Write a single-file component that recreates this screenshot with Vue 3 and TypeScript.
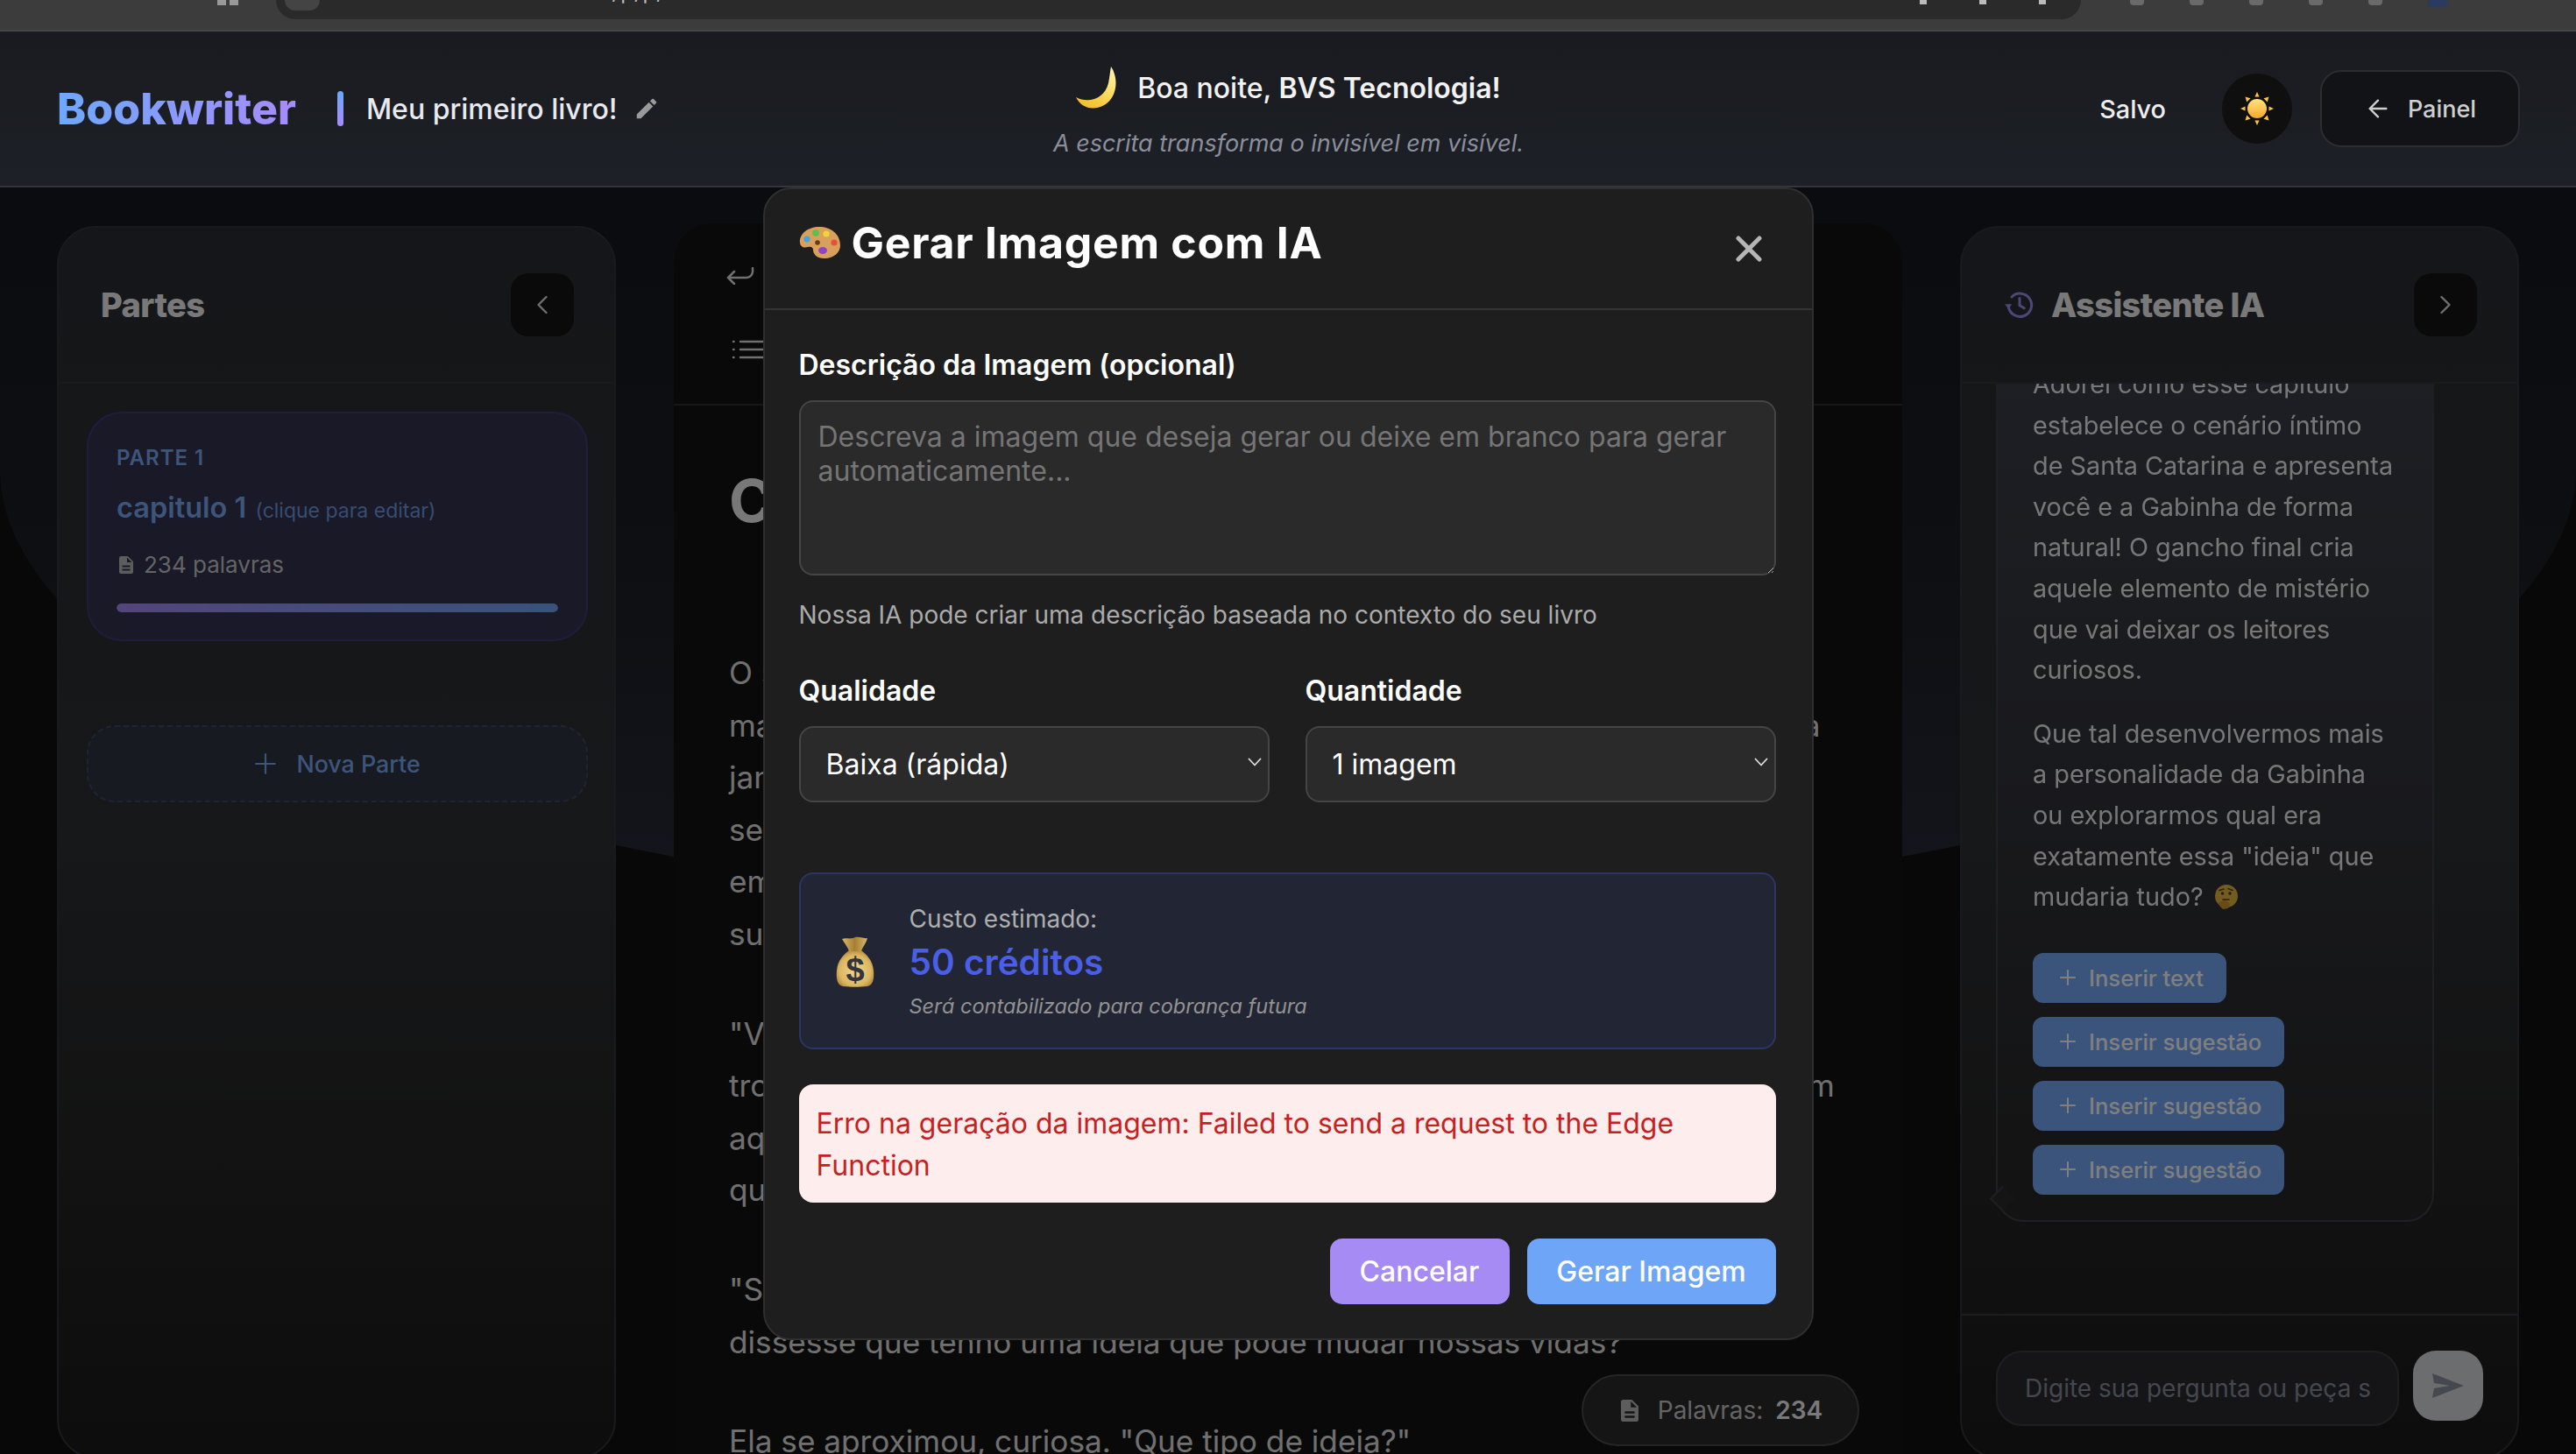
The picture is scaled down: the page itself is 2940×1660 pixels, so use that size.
<template>
  <div class="app">
    <!-- faixa do navegador -->
    <div class="chrome">
      <span class="chrome-dots"><i></i><i></i></span>
      <div class="url-bar">
        <span class="url-circle"></span>
        <span class="url-text">localhost/p/p/</span>
        <span class="url-icons"><i></i><i></i><i></i></span>
      </div>
      <span class="chrome-tools"><i></i><i></i><i></i><i></i><i></i><i class="avatar"></i></span>
    </div>

    <!-- cabeçalho -->
    <header class="header">
      <div class="header-left">
        <span class="logo">Bookwriter</span>
        <span class="logo-bar"></span>
        <span class="book-title">Meu primeiro livro!</span>
        <svg class="pencil" viewBox="0 0 24 24"><path d="M3 17.25V21h3.75L17.81 9.94l-3.75-3.75L3 17.25zM20.71 7.04a1 1 0 0 0 0-1.41l-2.34-2.34a1 1 0 0 0-1.41 0l-1.83 1.83 3.75 3.75 1.83-1.83z" /></svg>
      </div>
      <div class="header-center">
        <div class="greeting">
          <svg class="moon" viewBox="0 0 50 48">
            <defs>
              <linearGradient id="moonFill" x1="0.3" y1="1" x2="0.8" y2="0">
                <stop offset="0" stop-color="#f2bd2c" />
                <stop offset="0.6" stop-color="#fbe26e" />
                <stop offset="1" stop-color="#fff3b0" />
              </linearGradient>
            </defs>
            <path d="M40 0C52 18 44 47 20 47.500C11 47.700 4 43 0 35C15 43 33 36 37 19C38.500 12 39 5 40 0Z" fill="url(#moonFill)" />
          </svg>
          <span>Boa noite, <b>BVS Tecnologia!</b></span>
        </div>
        <div class="tagline">A escrita transforma o invisível em visível.</div>
      </div>
      <div class="header-right">
        <span class="saved">Salvo</span>
        <button class="theme-btn" type="button">
          <svg viewBox="0 0 40 40" width="40" height="40">
            <defs>
              <linearGradient id="sunFill" x1="0" y1="0" x2="0" y2="1">
                <stop offset="0" stop-color="#ffe47e" />
                <stop offset="1" stop-color="#f6a82a" />
              </linearGradient>
            </defs>
            <g fill="#f7c445">
              <path d="M20 1l2.600 5.500h-5.200zM20 39l-2.600-5.500h5.200zM1 20l5.500-2.600v5.200zM39 20l-5.500 2.600v-5.200z" />
              <path d="M6.500 6.500l6 1.800-4.200 4.200zM33.500 33.500l-6-1.800 4.200-4.200zM33.500 6.500l-1.800 6-4.200-4.200zM6.500 33.500l1.800-6 4.200 4.200z" />
            </g>
            <circle cx="20" cy="20" r="11" fill="url(#sunFill)" />
          </svg>
        </button>
        <button class="panel-btn" type="button">
          <svg viewBox="0 0 24 24" width="32" height="32" fill="none" stroke="currentColor" stroke-width="1.800" stroke-linecap="round" stroke-linejoin="round"><path d="M19 12H5M12 19l-7-7 7-7" /></svg>
          Painel
        </button>
      </div>
    </header>

    <main class="main">
      <!-- coluna de partes -->
      <aside class="panel">
        <div class="panel-head">
          <h2 class="panel-title">Partes</h2>
          <button class="collapse-btn" type="button">
            <svg viewBox="0 0 24 24" width="36" height="36" fill="none" stroke="currentColor" stroke-width="1.600" stroke-linecap="round" stroke-linejoin="round"><path d="M15 18l-6-6 6-6" /></svg>
          </button>
        </div>
        <div class="parts">
          <div class="part-card">
            <div class="part-label">PARTE 1</div>
            <div class="part-name">capitulo 1 <small>(clique para editar)</small></div>
            <div class="part-meta">
              <svg class="doc-icon" viewBox="0 0 16 20"><path :d="docPath" fill-rule="evenodd" /></svg>
              234 palavras
            </div>
            <div class="progress"><div class="progress-fill" :style="{ width: progress + '%' }"></div></div>
          </div>
          <button class="new-part" type="button">
            <svg viewBox="0 0 24 24" width="26" height="26" fill="none" stroke="currentColor" stroke-width="2" stroke-linecap="round"><path d="M12 2v20M2 12h20" /></svg>
            Nova Parte
          </button>
        </div>
      </aside>

      <!-- editor -->
      <section class="editor">
        <div class="toolbar">
          <div class="tool-row">
            <svg viewBox="0 0 32 20" width="32" height="20" fill="none" stroke="currentColor" stroke-width="2.500" stroke-linecap="round" stroke-linejoin="round"><path d="M30 1v4a7 7 0 0 1-7 7H2M9 5l-7 7 7 7" /></svg>
          </div>
          <div class="tool-row list-row">
            <svg viewBox="0 0 36 22" width="36" height="22" fill="none" stroke="currentColor" stroke-width="2" stroke-linecap="round"><path d="M10 2h26M10 11h26M10 20h26M2 2h.5M2 11h.5M2 20h.5" stroke-width="2.500" /></svg>
          </div>
        </div>
        <div class="page">
          <h1 class="chapter-title">Capitulo 1</h1>
          <p v-for="(para, i) in paragraphs" :key="i" class="para">
            <span v-for="line in para" :key="line" class="line">{{ line }}</span>
          </p>
        </div>
        <div class="word-pill">
          <svg class="doc-icon" viewBox="0 0 16 20"><path :d="docPath" fill-rule="evenodd" /></svg>
          <span>Palavras:</span>
          <b>234</b>
        </div>
      </section>

      <!-- assistente -->
      <aside class="panel">
        <div class="panel-head">
          <h2 class="panel-title assistant-title">
            <svg viewBox="0 0 24 24" width="36" height="36" fill="none" stroke="#9d8cf0" stroke-width="2" stroke-linecap="round" stroke-linejoin="round"><path d="M3.500 13A8.800 8.800 0 1 0 6 6" /><path d="M12 7v5.500l3.500 2" /><path d="M.8 11.500h5.400L3.500 15z" fill="#9d8cf0" stroke="none" /></svg>
            Assistente IA
          </h2>
          <button class="collapse-btn" type="button">
            <svg viewBox="0 0 24 24" width="36" height="36" fill="none" stroke="currentColor" stroke-width="1.600" stroke-linecap="round" stroke-linejoin="round"><path d="M9 18l6-6-6-6" /></svg>
          </button>
        </div>
        <div class="chat">
          <div class="bubble">
            <p class="bubble-text">Adorei como esse capítulo estabelece o cenário íntimo de Santa Catarina e apresenta você e a Gabinha de forma natural! O gancho final cria aquele elemento de mistério que vai deixar os leitores curiosos.</p>
            <p class="bubble-text">Que tal desenvolvermos mais a personalidade da Gabinha ou explorarmos qual era exatamente essa "ideia" que mudaria tudo?
              <svg class="think" viewBox="0 0 28 28">
                <circle cx="14" cy="13" r="13" fill="#f7c542" />
                <circle cx="9.500" cy="10" r="1.800" fill="#5a3e1b" />
                <circle cx="18" cy="10" r="1.800" fill="#5a3e1b" />
                <path d="M6 6.500l5-1.500M16 4.500l5 2M10 17h7" stroke="#5a3e1b" stroke-width="1.600" fill="none" stroke-linecap="round" />
                <path d="M5 20l6-2 4 1 3 3-2 5-6 1-4-4z" fill="#e0a030" />
              </svg>
            </p>
            <div class="inserts">
              <button v-for="(item, i) in inserts" :key="i" class="insert-btn" type="button">
                <svg viewBox="0 0 24 24" width="24" height="24" fill="none" stroke="currentColor" stroke-width="2" stroke-linecap="round"><path d="M12 4v16M4 12h16" /></svg>
                {{ item }}
              </button>
            </div>
            <span class="bubble-tail"></span>
          </div>
        </div>
        <div class="chat-input-row">
          <input class="chat-input" type="text" placeholder="Digite sua pergunta ou peça sugestões..." />
          <button class="send-btn" type="button">
            <svg viewBox="0 0 36 28" width="36" height="28"><path d="M0 0l36 14L0 28l2-11 18-3-18-3z" fill="#8a909e" /></svg>
          </button>
        </div>
      </aside>

      <!-- modal -->
      <div class="backdrop">
        <div class="modal">
          <div class="modal-head">
            <h3 class="modal-title">
              <svg class="palette" viewBox="0 0 48 38">
                <path d="M23 1C10 1 0 9 1 19c.6 6 6 6 9 5 3-1 6 0 6 3 0 5 4 10 13 10 11 0 18-7 18-15C47 9 36 1 23 1z" fill="#d9a05b" />
                <circle cx="9" cy="15" r="3.600" fill="#3fa4e8" />
                <circle cx="19" cy="8" r="3.800" fill="#5cc04c" />
                <circle cx="31" cy="9" r="3.600" fill="#f2d23c" />
                <circle cx="40" cy="19" r="3.600" fill="#e8503c" />
                <ellipse cx="27" cy="28" rx="5" ry="4" fill="#8e44c9" />
                <circle cx="21" cy="19" r="2.800" fill="#5f3d1c" />
              </svg>
              Gerar Imagem com IA
            </h3>
            <button class="close-btn" type="button">
              <svg viewBox="0 0 32 30" width="32" height="30" fill="none" stroke="currentColor" stroke-width="5" stroke-linecap="round"><path d="M4 3l24 24M28 3L4 27" /></svg>
            </button>
          </div>
          <div class="modal-body">
            <label class="field-label">Descrição da Imagem (opcional)</label>
            <textarea class="prompt" placeholder="Descreva a imagem que deseja gerar ou deixe em branco para gerar automaticamente..."></textarea>
            <p class="hint">Nossa IA pode criar uma descrição baseada no contexto do seu livro</p>

            <div class="selects">
              <div v-for="field in selects" :key="field.label" class="select-group">
                <label class="field-label">{{ field.label }}</label>
                <div class="select-wrap">
                  <select class="select">
                    <option>{{ field.value }}</option>
                  </select>
                  <svg class="select-arrow" viewBox="0 0 16 10" width="16" height="10" fill="none" stroke="#ddd" stroke-width="1.800" stroke-linecap="round" stroke-linejoin="round"><path d="M1.500 1.500L8 8.500l6.500-7" /></svg>
                </div>
              </div>
            </div>

            <div class="cost">
              <svg class="bag" viewBox="0 0 44 59">
                <defs>
                  <radialGradient id="bagFill" cx="0.5" cy="0.55" r="0.6">
                    <stop offset="0" stop-color="#efd68e" />
                    <stop offset="0.7" stop-color="#dcb763" />
                    <stop offset="1" stop-color="#a9812f" />
                  </radialGradient>
                  <linearGradient id="tieFill" x1="0" y1="0" x2="1" y2="0">
                    <stop offset="0" stop-color="#d9b868" />
                    <stop offset="0.5" stop-color="#a67f32" />
                    <stop offset="1" stop-color="#d9b868" />
                  </linearGradient>
                </defs>
                <path d="M15 17C9 22 2 28 1 40C0 50 2 57 8 58C16 59 28 59 36 58C42 57 44 50 43 40C42 28 35 22 29 17Z" fill="url(#bagFill)" />
                <path d="M7 4C12 2 16 5 22 2C28 1 33 4 36 3C34 10 30 14 29 18L15 18C14 14 10 9 7 4Z" fill="url(#tieFill)" />
                <text x="22" y="52" text-anchor="middle" class="bag-sign">$</text>
              </svg>
              <div class="cost-text">
                <div class="cost-label">Custo estimado:</div>
                <div class="cost-value">50 créditos</div>
                <div class="cost-note">Será contabilizado para cobrança futura</div>
              </div>
            </div>

            <div class="error-box">Erro na geração da imagem: Failed to send a request to the Edge Function</div>

            <div class="modal-actions">
              <button class="btn btn-cancel" type="button">Cancelar</button>
              <button class="btn btn-generate" type="button">Gerar Imagem</button>
            </div>
          </div>
        </div>
      </div>
    </main>
  </div>
</template>

<script setup lang="ts">
import { ref } from 'vue'

const progress = ref(100)

const docPath =
  'M2 0h8l6 6v12a2 2 0 0 1-2 2H2a2 2 0 0 1-2-2V2a2 2 0 0 1 2-2zM9 1.500V7h5.500zM3.500 10.500v2h9v-2zM3.500 14.500v2h9v-2z'

const inserts = ['Inserir text', 'Inserir sugestão', 'Inserir sugestão', 'Inserir sugestão']

const selects = [
  { label: 'Qualidade', value: 'Baixa (rápida)' },
  { label: 'Quantidade', value: '1 imagem' }
]

const paragraphs: string[][] = [
  [
    'O sol se punha sobre as praias de Santa Catarina enquanto eu',
    'mantinha os olhos fixos na tela do computador, e a Gabinha me esperava a',
    'janela aberta deixava entrar o cheiro salgado do mar pela casa',
    'sem pressa alguma, ela atravessou a sala com duas xícaras de café',
    'em silêncio, sentou-se ao meu lado e espiou todas as anotações da minha',
    'suposta grande história, aquela que eu nunca terminava.'
  ],
  [
    '"Você já pensou em largar tudo?", perguntei, sem coragem de olhar.',
    'trocando o peso de um pé para o outro, ela riu baixinho e disse que sim, em',
    'aquele lugar guardava segredos que nenhum de nós conhecia ainda',
    'quando o silêncio voltou, respirei fundo e fechei o caderno.'
  ],
  [
    '"Se eu te contasse tudo agora, você acreditaria? E se eu',
    'dissesse que tenho uma ideia que pode mudar nossas vidas?'
  ],
  ['Ela se aproximou, curiosa. "Que tipo de ideia?"']
]
</script>

<style>
html,
body {
  margin: 0;
  background: #060606;
}
</style>

<style scoped>
.app {
  width: 2940px;
  height: 1660px;
  overflow: hidden;
  display: flex;
  flex-direction: column;
  font-family: Inter, 'Liberation Sans', sans-serif;
  color: #fff;
}

button {
  font-family: inherit;
  border: none;
  cursor: pointer;
}

/* navegador */
.chrome {
  height: 34px;
  flex: none;
  background: #3c3c3c;
  border-bottom: 2px solid #474747;
  display: flex;
  align-items: flex-start;
  overflow: hidden;
}

.chrome-dots {
  display: flex;
  gap: 4px;
  margin-left: 248px;
}

.chrome-dots i {
  width: 10px;
  height: 6px;
  background: #999;
}

.url-bar {
  width: 2060px;
  height: 22px;
  margin-left: 43px;
  background: #2a2a2a;
  border-radius: 0 0 24px 24px;
  display: flex;
  align-items: flex-start;
  overflow: hidden;
}

.url-circle {
  width: 40px;
  height: 12px;
  margin-left: 10px;
  background: #444;
  border-radius: 0 0 20px 20px;
}

.url-text {
  margin: -24px 0 0 222px;
  font-size: 24px;
  line-height: 30px;
  letter-spacing: 1px;
  color: #bbb;
  white-space: nowrap;
}

.url-icons {
  margin-left: auto;
  margin-right: 40px;
  display: flex;
  gap: 60px;
}

.url-icons i {
  width: 8px;
  height: 5px;
  background: #bbb;
}

.chrome-tools {
  display: flex;
  gap: 52px;
  margin-left: 56px;
}

.chrome-tools i {
  width: 16px;
  height: 6px;
  background: #6a6a6a;
  border-radius: 0 0 4px 4px;
}

.chrome-tools .avatar {
  width: 22px;
  height: 8px;
  background: #2a3a60;
}

/* cabeçalho */
.header {
  height: 178px;
  flex: none;
  box-sizing: border-box;
  padding: 0 64px 0 65px;
  background: linear-gradient(180deg, #191b20 0%, #1d2026 100%);
  border-bottom: 2px solid #34363a;
  display: grid;
  grid-template-columns: 1fr auto 1fr;
  align-items: center;
}

.header-left {
  display: flex;
  align-items: center;
}

.logo {
  font-size: 50px;
  font-weight: 800;
  letter-spacing: 0;
  background: linear-gradient(90deg, #6ea8fe, #a78bfa);
  -webkit-background-clip: text;
  background-clip: text;
  color: transparent;
}

.logo-bar {
  width: 7px;
  height: 40px;
  margin: 0 26px 0 47px;
  border-radius: 4px;
  background: linear-gradient(180deg, #6ea8fe, #a78bfa);
}

.book-title {
  font-size: 32px;
  font-weight: 500;
  color: #e8eaf0;
}

.pencil {
  width: 30px;
  height: 30px;
  margin-left: 18px;
  fill: #9a9a9a;
}

.header-center {
  display: flex;
  flex-direction: column;
  align-items: center;
  gap: 23px;
  margin-top: 8px;
}

.greeting {
  display: flex;
  align-items: center;
  gap: 20px;
  font-size: 32px;
  font-weight: 500;
  color: #f2f2f2;
}

.greeting b {
  font-weight: 600;
}

.moon {
  width: 50px;
  height: 48px;
}

.tagline {
  font-size: 27px;
  font-style: italic;
  color: #8b8f9c;
}

.header-right {
  display: flex;
  align-items: center;
  justify-content: flex-end;
}

.saved {
  font-size: 28.800px;
  font-weight: 500;
  color: #eee;
  margin-right: 64px;
}

.theme-btn {
  width: 80px;
  height: 80px;
  border-radius: 50%;
  background: #0f0f0f;
  display: flex;
  align-items: center;
  justify-content: center;
  padding: 0;
}

.panel-btn {
  width: 228px;
  height: 88px;
  margin-left: 32px;
  background: #111317;
  border: 2px solid #2b2d33;
  border-radius: 24px;
  color: #cfcfcf;
  font-size: 27px;
  font-weight: 500;
  display: flex;
  align-items: center;
  justify-content: center;
  gap: 18px;
}

/* área principal */
.main {
  flex: 1;
  position: relative;
  overflow: hidden;
  box-sizing: border-box;
  padding: 44px 65px 0 65px;
  background: #101010;
  display: grid;
  grid-template-columns: 638px 1402px 638px;
  column-gap: 66px;
  align-items: start;
}

.main::before {
  content: '';
  position: absolute;
  left: 0;
  right: 0;
  top: 0;
  height: 825px;
  border-radius: 0 0 1470px 1470px / 0 0 504px 504px;
  background: linear-gradient(180deg, #16181e 0%, #1c1e24 50%, #2a2c3a 100%);
}

.panel {
  position: relative;
  height: 1407px;
  box-sizing: border-box;
  border: 2px solid #33353b;
  border-radius: 44px;
  background: linear-gradient(180deg, #2a2d33 0%, #2e3033 50%, #262627 75%, #1a1a1a 100%);
  display: flex;
  flex-direction: column;
  overflow: hidden;
}

.panel-head {
  height: 178px;
  flex: none;
  box-sizing: border-box;
  padding: 0 46px 0 48px;
  border-bottom: 2px solid #33353b;
  display: flex;
  align-items: center;
  justify-content: space-between;
}

.panel-title {
  margin: 0;
  font-size: 38px;
  font-weight: 800;
  letter-spacing: -0.6px;
  color: #f2f2f2;
}

.assistant-title {
  display: flex;
  align-items: center;
  gap: 18px;
}

.collapse-btn {
  width: 72px;
  height: 72px;
  border-radius: 20px;
  background: #141414;
  color: #ddd;
  display: flex;
  align-items: center;
  justify-content: center;
  padding: 0;
}

.parts {
  padding: 32px 30px 0 32px;
}

.part-card {
  box-sizing: border-box;
  height: 262px;
  padding: 36px 32px 0;
  border: 2px solid #3c3a7c;
  border-radius: 40px;
  background: #32324e;
}

.part-label {
  font-size: 24px;
  font-weight: 600;
  letter-spacing: 1px;
  line-height: 30px;
  color: #7cabf5;
}

.part-name {
  margin-top: 18px;
  font-size: 32.500px;
  font-weight: 600;
  line-height: 48px;
  color: #7cabf5;
}

.part-name small {
  margin-left: 2px;
  font-size: 23px;
  font-weight: 400;
  color: #6f9ae0;
}

.part-meta {
  margin-top: 22px;
  display: flex;
  align-items: center;
  gap: 12px;
  font-size: 26px;
  line-height: 32px;
  color: #c8c8c8;
}

.doc-icon {
  width: 16px;
  height: 20px;
  fill: #bbb;
  margin-left: 3px;
}

.progress {
  margin-top: 28px;
  height: 10px;
  border-radius: 5px;
  background: #2a2a40;
  overflow: hidden;
}

.progress-fill {
  height: 100%;
  border-radius: 5px;
  background: linear-gradient(90deg, #a78bfa, #70a5f5);
}

.new-part {
  width: 100%;
  height: 88px;
  margin-top: 96px;
  border: 2px dashed #3f4a60;
  border-radius: 32px;
  background: #2e3440;
  color: #7cabf5;
  font-size: 26.800px;
  font-weight: 500;
  display: flex;
  align-items: center;
  justify-content: center;
  gap: 22px;
}

/* editor */
.editor {
  position: relative;
  margin-top: -3px;
  height: 1500px;
  border-radius: 44px 44px 0 0;
  background: #121212;
}

.toolbar {
  height: 208px;
  box-sizing: border-box;
  border-bottom: 2px solid #2e2e2e;
  color: #e0e0e0;
}

.tool-row {
  height: 120px;
  padding-left: 60px;
  display: flex;
  align-items: center;
}

.list-row {
  height: 48px;
  padding-left: 66px;
}

.page {
  padding: 67px 63px 0;
}

.chapter-title {
  margin: 0 0 127px;
  font-size: 68px;
  line-height: 82px;
  font-weight: 700;
  color: #f0f0f0;
}

.para {
  margin: 0 0 54px;
  font-size: 35.200px;
  line-height: 59.600px;
  color: #e0e0e0;
}

.line {
  display: block;
  white-space: nowrap;
}

.word-pill {
  position: absolute;
  left: 1036px;
  top: 1314px;
  height: 82px;
  width: 317px;
  box-sizing: border-box;
  border: 2px solid #4a4a4a;
  border-radius: 41px;
  background: #2a2a2a;
  display: flex;
  align-items: center;
  justify-content: center;
  gap: 14px;
  font-size: 28px;
  color: #c8c8c8;
}

.word-pill .doc-icon {
  width: 20px;
  height: 25px;
  margin-right: 8px;
}

.word-pill b {
  font-weight: 600;
  color: #f2f2f2;
}

/* assistente */
.chat {
  height: 1062px;
  flex: none;
  overflow: hidden;
  box-sizing: border-box;
  padding: 0 0 0 39px;
}

.bubble {
  position: relative;
  width: 500px;
  height: 981px;
  box-sizing: border-box;
  margin-top: -24px;
  padding: 0 40px;
  border: 2px solid #3f4046;
  border-radius: 0 0 32px 32px;
  background: linear-gradient(180deg, #3c3e48 0%, #32333a 50%, #262626 100%);
}

.bubble-text {
  margin: 0 0 26px;
  font-size: 28.800px;
  line-height: 46.600px;
  color: #fff;
  opacity: 0.92;
}

.think {
  width: 28px;
  height: 28px;
  vertical-align: -4px;
  margin-left: 4px;
}

.inserts {
  margin-top: 40px;
  display: flex;
  flex-direction: column;
  align-items: flex-start;
  gap: 16px;
}

.insert-btn {
  height: 57px;
  padding: 0 26px 0 28px;
  border-radius: 12px;
  background: #76a9f7;
  color: #fff;
  font-size: 25.600px;
  font-weight: 500;
  display: flex;
  align-items: center;
  gap: 12px;
}

.bubble-tail {
  position: absolute;
  left: -5px;
  bottom: 14px;
  width: 19px;
  height: 19px;
  transform: rotate(45deg);
  background: #2a2a2c;
  border-left: 2px solid #3f4046;
  border-bottom: 2px solid #3f4046;
}

.chat-input-row {
  border-top: 2px solid #3a3b40;
  padding: 40px 37px 0 39px;
  display: flex;
  gap: 16px;
  align-items: flex-start;
}

.chat-input {
  width: 460px;
  height: 86px;
  box-sizing: border-box;
  padding: 0 31px;
  border: 2px solid #3e3f44;
  border-radius: 30px;
  background: #2a2b2f;
  color: #fff;
  font-family: inherit;
  font-size: 28px;
  outline: none;
}

.chat-input::placeholder {
  color: #8a8f9c;
}

.send-btn {
  width: 80px;
  height: 80px;
  border-radius: 26px;
  background: #d8dade;
  display: flex;
  align-items: center;
  justify-content: center;
  padding: 0;
}

/* modal */
.backdrop {
  position: absolute;
  inset: 0;
  background: rgba(0, 0, 0, 0.5);
  display: flex;
  justify-content: center;
  align-items: flex-start;
}

.modal {
  width: 1199px;
  height: 1316px;
  box-sizing: border-box;
  border: 2px solid #2f2f2f;
  border-radius: 32px;
  background: #1e1e1e;
}

.modal-head {
  height: 138px;
  box-sizing: border-box;
  padding: 0 56px 0 39px;
  border-bottom: 2px solid #333;
  display: flex;
  align-items: center;
  justify-content: space-between;
}

.modal-title {
  margin: 0 0 14px;
  display: flex;
  align-items: center;
  gap: 12px;
  font-size: 50px;
  font-weight: 700;
  letter-spacing: 0.7px;
  color: #fff;
}

.palette {
  width: 48px;
  height: 38px;
}

.close-btn {
  background: none;
  color: #b5b5b5;
  padding: 0;
  display: flex;
}

.modal-body {
  padding: 43px 41px 0 39px;
}

.field-label {
  display: block;
  font-size: 32px;
  font-weight: 600;
  line-height: 40px;
  color: #fff;
}

.prompt {
  display: block;
  width: 100%;
  height: 200px;
  box-sizing: border-box;
  margin-top: 20px;
  padding: 20px 20px;
  border: 2px solid #454545;
  border-radius: 16px;
  background: #2a2a2a;
  color: #fff;
  font-family: inherit;
  font-size: 32px;
  line-height: 39px;
  outline: none;
}

.prompt::placeholder {
  color: #757575;
}

.hint {
  margin: 26px 0 0;
  font-size: 28px;
  line-height: 38px;
  color: #ababab;
}

.selects {
  margin-top: 48px;
  display: grid;
  grid-template-columns: 1fr 1fr;
  column-gap: 41px;
}

.select-wrap {
  position: relative;
  margin-top: 20px;
}

.select {
  width: 100%;
  height: 87px;
  box-sizing: border-box;
  padding: 0 29px;
  border: 2px solid #454545;
  border-radius: 16px;
  background: #2a2a2a;
  color: #fff;
  font-family: inherit;
  font-size: 32px;
  outline: none;
  appearance: none;
}

.select-arrow {
  position: absolute;
  right: 9px;
  top: 36px;
  pointer-events: none;
}

.cost {
  height: 202px;
  box-sizing: border-box;
  margin-top: 80px;
  padding: 0 40px;
  border: 2px solid #2c3566;
  border-radius: 16px;
  background: #222634;
  display: flex;
  align-items: center;
  gap: 40px;
}

.bag {
  width: 44px;
  height: 59px;
  flex: none;
}

.bag-sign {
  font-family: 'Liberation Sans', sans-serif;
  font-size: 38px;
  font-weight: 700;
  fill: #34343c;
}

.cost-text {
  margin-top: 2px;
}

.cost-label {
  font-size: 28px;
  line-height: 36px;
  color: #aeaeae;
}

.cost-value {
  margin-top: 6px;
  font-size: 40.500px;
  font-weight: 600;
  line-height: 52px;
  color: #4a5fe6;
}

.cost-note {
  margin-top: 8px;
  font-size: 23.500px;
  font-style: italic;
  line-height: 32px;
  color: #939393;
}

.error-box {
  height: 135px;
  box-sizing: border-box;
  margin-top: 40px;
  padding: 21px 20px 0;
  border-radius: 16px;
  background: #fdeeed;
  color: #c5221f;
  font-size: 32px;
  line-height: 48px;
}

.modal-actions {
  margin-top: 41px;
  display: flex;
  justify-content: flex-end;
  gap: 20px;
}

.btn {
  height: 75px;
  border-radius: 14px;
  color: #fff;
  font-size: 32px;
  font-weight: 500;
}

.btn-cancel {
  width: 205px;
  background: #a78bf5;
}

.btn-generate {
  width: 284px;
  background: #6ea5f7;
}
</style>
